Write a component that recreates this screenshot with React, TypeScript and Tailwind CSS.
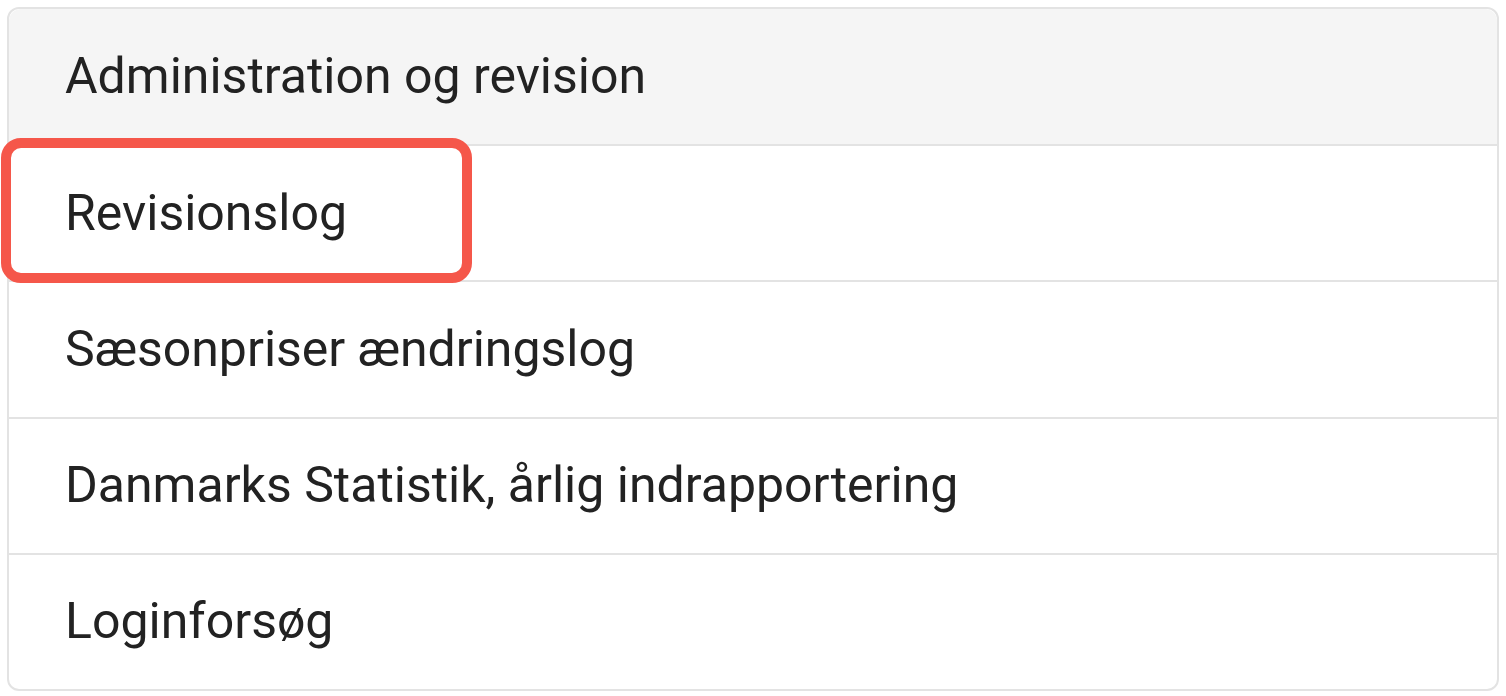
const items = [
  "Revisionslog",
  "Sæsonpriser ændringslog",
  "Danmarks Statistik, årlig indrapportering",
  "Loginforsøg",
];

export default function App() {
  return (
    <div className="w-[1506px] h-[696px] bg-white p-[7px] pb-[5px] font-['Roboto',sans-serif] text-[#222]">
      <div className="relative h-full rounded-[12px] border-2 border-[#e3e3e3] flex flex-col">
        <div className="h-[137px] shrink-0 flex items-center pl-[56px] bg-[#f5f5f5] rounded-t-[12px] border-b-2 border-[#e3e3e3] text-[50px]">
          Administration og revision
        </div>
        {items.map((label, i) => (
          <div
            key={label}
            className={`flex-1 flex items-center pl-[56px] text-[50px] ${
              i < items.length - 1 ? "border-b-2 border-[#e3e3e3]" : ""
            }`}
          >
            {label}
          </div>
        ))}
        {/* highlight box */}
        <div className="absolute left-[-8px] top-[129px] w-[471px] h-[145px] rounded-[20px] border-[10px] border-[#f5574a]" />
      </div>
    </div>
  );
}
